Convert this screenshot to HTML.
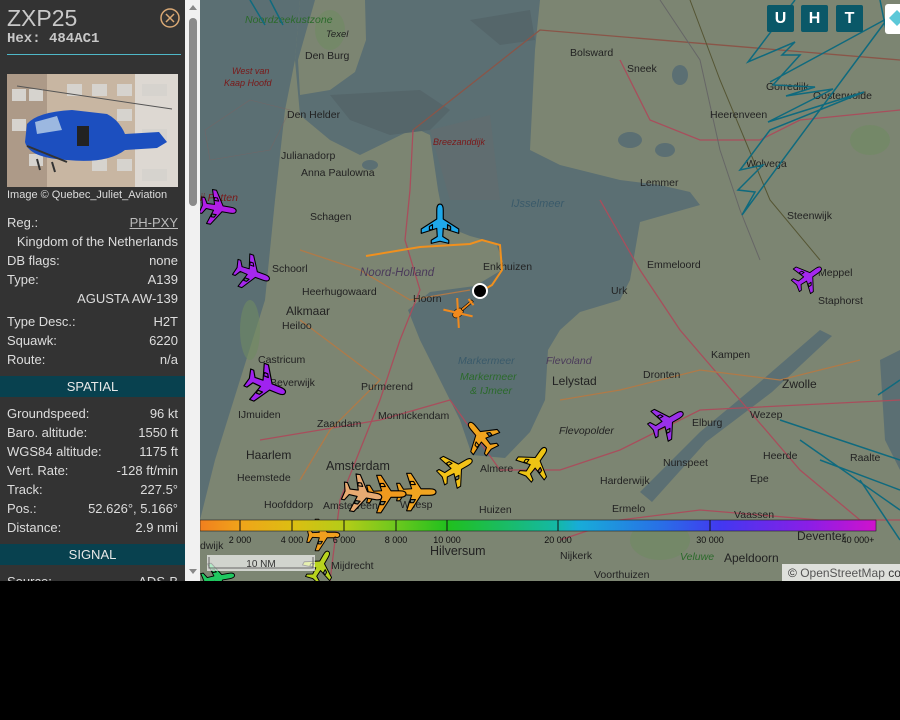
<!DOCTYPE html>
<html><head><meta charset="utf-8"><style>
*{margin:0;padding:0;box-sizing:border-box}
body{width:900px;height:720px;background:#000;overflow:hidden;font-family:"Liberation Sans",sans-serif;position:relative}
#side{position:absolute;left:0;top:0;width:185px;height:581px;background:#333;color:#ddd;overflow:hidden}
#sb{position:absolute;left:185px;top:0;width:15px;height:581px;background:#f1f1f1}
.row{position:absolute;left:7px;width:171px;font-size:13px;line-height:19px;display:flex;justify-content:space-between}
.hdr{position:absolute;left:0;width:185px;height:21px;background:#08414f;color:#e8e8e8;font-size:13px;line-height:21px;text-align:center}
#map{position:absolute;left:200px;top:0;width:700px;height:581px;overflow:hidden}
.btn{position:absolute;top:5px;width:27px;height:27px;background:#0a5868;color:#fff;font-weight:bold;font-size:16px;line-height:27px;text-align:center;border-radius:2px}
</style></head><body>
<div id="side">
 <div style="position:absolute;left:7px;top:5px;font-size:23px;color:#c8c8c8">ZXP25</div>
 <div style="position:absolute;left:7px;top:31px;font-size:14px;font-weight:bold;font-family:'Liberation Mono',monospace;color:#c8c8c8">Hex: 484AC1</div>
 <svg style="position:absolute;left:159px;top:7px" width="22" height="22"><circle cx="11" cy="11" r="9" fill="none" stroke="#d9a874" stroke-width="1.5"/><path d="M7 7L15 15M15 7L7 15" stroke="#d9a874" stroke-width="1.5"/></svg>
 <div style="position:absolute;left:7px;top:54px;width:174px;height:1px;background:#4fb8c8"></div>
 <svg style="position:absolute;left:7px;top:74px" width="171" height="113">
  <rect width="171" height="113" fill="#c8b6a2"/>
  <rect x="0" y="0" width="40" height="113" fill="#ad9a88"/>
  <rect x="128" y="0" width="43" height="113" fill="#ddd8d2"/>
  <g fill="#d6d3ce">
   <rect x="5" y="15" width="14" height="12"/><rect x="22" y="15" width="14" height="12"/><rect x="5" y="45" width="14" height="12"/><rect x="22" y="80" width="14" height="12"/>
   <rect x="60" y="10" width="15" height="12"/><rect x="85" y="10" width="15" height="12"/><rect x="110" y="10" width="15" height="12"/><rect x="110" y="35" width="15" height="12"/>
   <rect x="85" y="85" width="15" height="12"/><rect x="110" y="85" width="15" height="12"/><rect x="135" y="10" width="25" height="12"/><rect x="135" y="55" width="25" height="12"/><rect x="135" y="95" width="25" height="12"/>
  </g>
  <path d="M10 12L165 35" stroke="#555" stroke-width="1"/>
  <path d="M20 50Q30 38 65 36L100 40Q112 46 118 60L152 58L160 68L150 74L118 76Q100 90 60 86Q22 84 18 68Z" fill="#1c4fbf"/>
  <path d="M28 48L50 42L55 56L30 60Z" fill="#9cb8e0"/>
  <path d="M20 72L60 88M30 85L33 96M45 88L48 98" stroke="#333" stroke-width="2"/>
  <rect x="70" y="52" width="12" height="20" fill="#222"/>
 </svg>
 <div style="position:absolute;left:7px;top:189px;font-size:11px;color:#ddd">Image © Quebec_Juliet_Aviation</div>
 <div class="row" style="top:213px"><span>Reg.:</span><span style="text-decoration:underline;color:#bbb">PH-PXY</span></div>
 <div class="row" style="top:232px;justify-content:flex-end"><span>Kingdom of the Netherlands</span></div>
 <div class="row" style="top:251px"><span>DB flags:</span><span>none</span></div>
 <div class="row" style="top:270px"><span>Type:</span><span>A139</span></div>
 <div class="row" style="top:289px;justify-content:flex-end"><span>AGUSTA AW-139</span></div>
 <div class="row" style="top:312px"><span>Type Desc.:</span><span>H2T</span></div>
 <div class="row" style="top:331px"><span>Squawk:</span><span>6220</span></div>
 <div class="row" style="top:350px"><span>Route:</span><span>n/a</span></div>
 <div class="hdr" style="top:376px">SPATIAL</div>
 <div class="row" style="top:404px"><span>Groundspeed:</span><span>96 kt</span></div>
 <div class="row" style="top:423px"><span>Baro. altitude:</span><span>1550 ft</span></div>
 <div class="row" style="top:442px"><span>WGS84 altitude:</span><span>1175 ft</span></div>
 <div class="row" style="top:461px"><span>Vert. Rate:</span><span>-128 ft/min</span></div>
 <div class="row" style="top:480px"><span>Track:</span><span>227.5°</span></div>
 <div class="row" style="top:499px"><span>Pos.:</span><span>52.626°, 5.166°</span></div>
 <div class="row" style="top:518px"><span>Distance:</span><span>2.9 nmi</span></div>
 <div class="hdr" style="top:544px">SIGNAL</div>
 <div class="row" style="top:572px"><span>Source:</span><span>ADS-B</span></div>
</div>
<div id="sb">
 <div style="position:absolute;left:4px;top:5px;width:0;height:0;border-left:4px solid transparent;border-right:4px solid transparent;border-bottom:5px solid #888"></div>
 <div style="position:absolute;left:4px;top:18px;width:8px;height:188px;background:#8a8a8a;border-radius:4px"></div>
 <div style="position:absolute;left:4px;top:569px;width:0;height:0;border-left:4px solid transparent;border-right:4px solid transparent;border-top:5px solid #888"></div>
</div>
<div id="map">
<svg width="700" height="581" viewBox="200 0 700 581" style="position:absolute;left:0;top:0;font-family:'Liberation Sans',sans-serif">
 <defs>
  <path id="pl" d="M0,-16 C1.8,-16 2.6,-14 2.6,-11 L2.6,-4 L15,4 L15,7.5 L2.6,3.5 L2.2,10 L7,13 L7,15.5 L0,13.8 L-7,15.5 L-7,13 L-2.2,10 L-2.6,3.5 L-15,7.5 L-15,4 L-2.6,-4 L-2.6,-11 C-2.6,-14 -1.8,-16 0,-16Z M6,0.5 L6,4.5 L8.5,4.5 L8.5,2 Z M-6,0.5 L-6,4.5 L-8.5,4.5 L-8.5,2 Z" stroke="#000" stroke-width="0.9" stroke-linejoin="round"/>
 </defs>
 <rect x="200" y="0" width="700" height="581" fill="#7c8572"/>
 <path d="M200,0L300,0L295,60L285,110L275,200L265,300L240,380L215,460L200,520Z" fill="#5b6f73"/>
 <path d="M300,0L540,0L535,50L530,150L560,165L620,180L660,185L690,192L700,205L640,222L630,280L620,300L580,312L560,330L548,350L545,400L530,432L505,458L472,455L460,420L440,380L420,340L408,310L430,292L475,286L505,268L496,243L470,236L445,226L438,190L430,135L415,128L360,155L330,140L300,115L295,60Z" fill="#5b6f73"/>
 <path d="M330,95L420,90L450,110L430,130L390,135L350,120Z" fill="#55666a"/>
 <path d="M470,20L530,10L535,40L500,45Z" fill="#55666a"/>
 <path d="M315,0L365,0L366,40L355,72L330,90L300,95L298,60Z" fill="#7c8572"/>
 <path d="M640,492L700,432L760,382L820,330L832,336L772,392L706,442L652,502Z" fill="#5b6f73"/>
 <path d="M880,360L900,350L900,470L885,440Z" fill="#5b6f73"/>
 <ellipse cx="630" cy="140" rx="12" ry="8" fill="#5b6f73"/><ellipse cx="665" cy="150" rx="10" ry="7" fill="#5b6f73"/><ellipse cx="680" cy="75" rx="8" ry="10" fill="#5b6f73"/><ellipse cx="370" cy="165" rx="8" ry="5" fill="#5b6f73"/>
 <g fill="#6f8a62" opacity="0.6"><ellipse cx="330" cy="30" rx="15" ry="20"/><ellipse cx="660" cy="540" rx="30" ry="20"/><ellipse cx="870" cy="140" rx="20" ry="15"/><ellipse cx="250" cy="330" rx="10" ry="30"/></g>
 <path d="M205,130L250,100L290,110L270,150L210,160Z" fill="none" stroke="#806060" stroke-width="0.6" opacity="0.6"/>
 <path d="M430,130L490,115L500,200L450,200Z" fill="#6a6b6b" opacity="0.4"/>
 <g fill="none" stroke-width="1.3">
  <path d="M413,130L540,30L900,60" stroke="#8a5548"/>
  <path d="M413,130L410,190L405,240L420,290L400,340L380,400L360,450L340,500L330,581" stroke="#a84e5c"/>
  <path d="M260,440L320,430L380,420L450,400L500,470L560,470L620,450L700,410L900,400" stroke="#a84e5c"/>
  <path d="M620,60L650,120L700,140L760,140L800,120L900,110" stroke="#a84e5c"/>
  <path d="M600,200L640,270L680,330L740,400L800,470L860,520" stroke="#a84e5c"/>
  <path d="M300,250L360,270L410,300L470,290" stroke="#b07a48"/>
  <path d="M300,320L340,350L380,380L330,430L300,480" stroke="#b07a48"/>
  <path d="M560,400L620,390L700,370L780,380L860,360" stroke="#b07a48"/>
  <path d="M660,0L700,60L720,150L740,210L760,260" stroke="#666" stroke-width="1"/>
  <path d="M690,0L720,80L770,200L820,260" stroke="#553" stroke-width="1"/>
  <path d="M560,540L620,520L700,510L820,520L900,520" stroke="#a84e5c"/>
 </g>
 <g font-size="10.5" fill="#222">
  <text x="245" y="23" fill="#2b6a2b" font-style="italic">Noordzeekustzone</text>
  <text x="326" y="37" font-style="italic" font-size="9.5">Texel</text>
  <text x="305" y="59">Den Burg</text>
  <text x="232" y="74" fill="#7a1818" font-style="italic" font-size="9">West van</text>
  <text x="224" y="86" fill="#7a1818" font-style="italic" font-size="9">Kaap Hoofd</text>
  <text x="287" y="118">Den Helder</text>
  <text x="281" y="159">Julianadorp</text>
  <text x="301" y="176">Anna Paulowna</text>
  <text x="433" y="145" fill="#7a1818" font-style="italic" font-size="9">Breezanddijk</text>
  <text x="310" y="220">Schagen</text>
  <text x="272" y="272">Schoorl</text>
  <text x="302" y="295">Heerhugowaard</text>
  <text x="360" y="276" fill="#4a3a5a" font-style="italic" font-size="11.5">Noord-Holland</text>
  <text x="413" y="302">Hoorn</text>
  <text x="483" y="270">Enkhuizen</text>
  <text x="511" y="207" fill="#3a5a6a" font-style="italic" font-size="11">IJsselmeer</text>
  <text x="286" y="315" font-size="12">Alkmaar</text>
  <text x="282" y="329">Heiloo</text>
  <text x="258" y="363">Castricum</text>
  <text x="270" y="386">Beverwijk</text>
  <text x="238" y="418">IJmuiden</text>
  <text x="361" y="390">Purmerend</text>
  <text x="378" y="419">Monnickendam</text>
  <text x="317" y="427">Zaandam</text>
  <text x="246" y="459" font-size="12">Haarlem</text>
  <text x="237" y="481">Heemstede</text>
  <text x="326" y="470" font-size="12.5">Amsterdam</text>
  <text x="264" y="508">Hoofddorp</text>
  <text x="323" y="509">Amstelveen</text>
  <text x="400" y="508">Weesp</text>
  <text x="458" y="364" fill="#3a5a6a" font-style="italic">Markermeer</text>
  <text x="460" y="380" fill="#2b6a2b" font-style="italic">Markermeer</text>
  <text x="470" y="394" fill="#2b6a2b" font-style="italic">&amp; IJmeer</text>
  <text x="546" y="364" fill="#4a3a5a" font-style="italic">Flevoland</text>
  <text x="552" y="385" font-size="12">Lelystad</text>
  <text x="559" y="434" font-style="italic">Flevopolder</text>
  <text x="480" y="472">Almere</text>
  <text x="479" y="513">Huizen</text>
  <text x="570" y="56">Bolsward</text>
  <text x="627" y="72">Sneek</text>
  <text x="710" y="118">Heerenveen</text>
  <text x="766" y="90">Gorredijk</text>
  <text x="813" y="99">Oosterwolde</text>
  <text x="746" y="167">Wolvega</text>
  <text x="640" y="186">Lemmer</text>
  <text x="787" y="219">Steenwijk</text>
  <text x="647" y="268">Emmeloord</text>
  <text x="611" y="294">Urk</text>
  <text x="818" y="276">Meppel</text>
  <text x="818" y="304">Staphorst</text>
  <text x="711" y="358">Kampen</text>
  <text x="782" y="388" font-size="12">Zwolle</text>
  <text x="643" y="378">Dronten</text>
  <text x="692" y="426">Elburg</text>
  <text x="750" y="418">Wezep</text>
  <text x="663" y="466">Nunspeet</text>
  <text x="763" y="459">Heerde</text>
  <text x="600" y="484">Harderwijk</text>
  <text x="750" y="482">Epe</text>
  <text x="612" y="512">Ermelo</text>
  <text x="734" y="518">Vaassen</text>
  <text x="850" y="461">Raalte</text>
  <text x="797" y="540" font-size="12">Deventer</text>
  <text x="430" y="555" font-size="12.5">Hilversum</text>
  <text x="560" y="559">Nijkerk</text>
  <text x="680" y="560" fill="#2b6a2b" font-style="italic">Veluwe</text>
  <text x="724" y="562" font-size="12">Apeldoorn</text>
  <text x="594" y="578">Voorthuizen</text>
  <text x="331" y="569">Mijdrecht</text>
  <text x="200" y="549">dwijk</text>
  <text x="200" y="201" fill="#7a1818" font-style="italic">ij Petten</text>
 </g>
 <g fill="none" stroke="#0f6a7e" stroke-width="1.5">
  <path d="M795,0L748,62L795,42L782,55L800,55L773,85L815,87L786,96L833,89L768,122L864,92L770,130L740,170L763,165L738,190L755,192L742,215L888,18L770,82"/>
  <path d="M880,0L886,30M900,380L878,395M780,420L900,460M800,440L900,510M820,460L900,490M860,480L900,540"/>
  <path d="M250,0L265,25M270,0L283,25"/>
 </g>
 <path d="M366,256L420,247L470,244L482,240L500,245L502,270L492,285L480,292" fill="none" stroke="#f0901e" stroke-width="2"/>
 <g>
  <use href="#pl" transform="translate(440,224) scale(1.25)" fill="#1fa8ea"/>
  <use href="#pl" transform="translate(218,208) rotate(100) scale(1.15)" fill="#b01ee6"/>
  <use href="#pl" transform="translate(252,273) rotate(110) scale(1.15)" fill="#a628ee"/>
  <use href="#pl" transform="translate(266,385) rotate(112) scale(1.3)" fill="#a022f0"/>
  <use href="#pl" transform="translate(808,277) rotate(55) scale(1)" fill="#a428ee"/>
  <use href="#pl" transform="translate(667,422) rotate(60) scale(1.15)" fill="#9a30ea"/>
  <use href="#pl" transform="translate(481,437) rotate(-40) scale(1.15)" fill="#f1a41e"/>
  <use href="#pl" transform="translate(456,469) rotate(60) scale(1.15)" fill="#f2c218"/>
  <use href="#pl" transform="translate(535,463) rotate(35) scale(1.15)" fill="#eec414"/>
  <use href="#pl" transform="translate(416,492) rotate(90) scale(1.25)" fill="#f0a420"/>
  <use href="#pl" transform="translate(386,494) rotate(90) scale(1.25)" fill="#f09a1e"/>
  <use href="#pl" transform="translate(362,494) rotate(100) scale(1.25)" fill="#e8aa72"/>
  <use href="#pl" transform="translate(323,535) rotate(90) scale(1.05)" fill="#f0a01e"/>
  <use href="#pl" transform="translate(320,566) rotate(30) scale(1.05)" fill="#b8d41e"/>
  <use href="#pl" transform="translate(218,578) rotate(80) scale(1.05)" fill="#20c860"/>
 </g>
 <g transform="translate(458,313) rotate(-130)" stroke="#000" stroke-width="0.6" fill="#f08a1e">
  <ellipse cx="0" cy="0" rx="4" ry="6"/>
  <rect x="-1.2" y="5" width="2.4" height="14"/>
  <path d="M-4,17L4,17" stroke="#f08a1e" stroke-width="2"/>
  <path d="M-12,-9L12,9M-12,9L12,-9" stroke="#f08a1e" stroke-width="2"/>
 </g>
 <circle cx="480" cy="291" r="7" fill="#000" stroke="#fff" stroke-width="2"/>
 <defs><linearGradient id="cb" x1="200" x2="876" gradientUnits="userSpaceOnUse">
  <stop offset="0" stop-color="#f07f1e"/><stop offset="0.06" stop-color="#f0a41a"/><stop offset="0.137" stop-color="#dcbe12"/><stop offset="0.214" stop-color="#b4cc18"/><stop offset="0.29" stop-color="#6cc81e"/><stop offset="0.367" stop-color="#20c01e"/><stop offset="0.53" stop-color="#14b8a8"/><stop offset="0.56" stop-color="#18acd8"/><stop offset="0.68" stop-color="#2870e6"/><stop offset="0.77" stop-color="#4238f0"/><stop offset="0.9" stop-color="#8a1ee6"/><stop offset="1" stop-color="#d012cc"/>
 </linearGradient></defs>
 <rect x="200" y="520" width="676" height="11" fill="url(#cb)" stroke="#222" stroke-width="0.6"/>
 <g stroke="#111" stroke-width="1"><path d="M240,520V531M292,520V531M344,520V531M396,520V531M447,520V531M558,520V531M710,520V531"/></g>
 <g font-size="9" fill="#111" text-anchor="middle">
  <text x="240" y="543">2 000</text><text x="292" y="543">4 000</text><text x="344" y="543">6 000</text><text x="396" y="543">8 000</text><text x="447" y="543">10 000</text><text x="558" y="543">20 000</text><text x="710" y="543">30 000</text><text x="858" y="543">40 000+</text>
 </g>
 <rect x="207" y="555" width="108" height="16" fill="#fff" opacity="0.65"/>
 <path d="M209,557V568H313V557" fill="none" stroke="#666" stroke-width="1"/>
 <text x="261" y="567" font-size="10" fill="#333" text-anchor="middle">10 NM</text>
 <rect x="782" y="564" width="118" height="17" fill="#fff" opacity="0.75"/>
 <text x="788" y="577" font-size="12" fill="#333">© <tspan fill="#555">OpenStreetMap</tspan> co</text>
</svg>
<div class="btn" style="left:567px">U</div>
<div class="btn" style="left:601px">H</div>
<div class="btn" style="left:636px">T</div>
<div style="position:absolute;left:685px;top:4px;width:20px;height:30px;background:#fff;border-radius:3px"><svg width="20" height="30"><path d="M4,14L12,6L20,14L12,22Z" fill="#5cc8d8"/></svg></div>
</div>
</body></html>
